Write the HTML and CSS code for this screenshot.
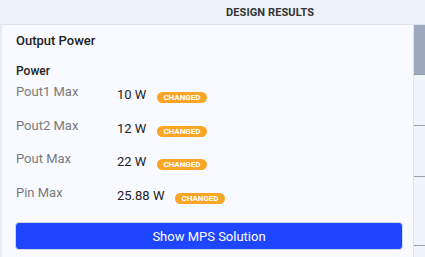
FILE: index.html
```html
<!DOCTYPE html>
<html>
<head>
<meta charset="utf-8">
<link rel="stylesheet" href="styles.css">
</head>
<body>
<div class="header">DESIGN RESULTS</div>
<div class="main">
  <div class="panel">
    <div class="title">Output Power</div>
    <div class="section">Power</div>
    <div class="row">
      <div class="label">Pout1 Max</div>
      <div class="value">10 W</div>
      <div class="badge">CHANGED</div>
    </div>
    <div class="row">
      <div class="label">Pout2 Max</div>
      <div class="value">12 W</div>
      <div class="badge">CHANGED</div>
    </div>
    <div class="row">
      <div class="label">Pout Max</div>
      <div class="value">22 W</div>
      <div class="badge">CHANGED</div>
    </div>
    <div class="row">
      <div class="label">Pin Max</div>
      <div class="value">25.88 W</div>
      <div class="badge">CHANGED</div>
    </div>
    <button class="btn">Show MPS Solution</button>
  </div>
  <div class="scroll">
    <div class="thumb"></div>
    <div class="seg s1"></div>
    <div class="seg s2"></div>
    <div class="seg s3"></div>
  </div>
</div>
</body>
</html>
```
FILE: styles.css
```css
html, body {
  margin: 0;
  padding: 0;
  height: 100%;
  overflow: hidden;
}
body {
  background: #e6ebf3;
  font-family: Roboto, "Liberation Sans", sans-serif;
  color: #222;
}
.header {
  height: 24px;
  line-height: 25px;
  background: #eef3fb;
  border-bottom: 1px solid #dfe5ee;
  padding-left: 226px;
  font-size: 11px;
  font-weight: 700;
  letter-spacing: 0.1px;
  color: #333;
}
.main {
  display: flex;
  height: 232px;
}
.panel {
  margin-left: 2px;
  width: 411px;
  background: #f8faff;
  padding: 8px 10px 0 14px;
  box-sizing: border-box;
  display: flex;
  flex-direction: column;
}
.title {
  font-size: 13px;
  line-height: 16px;
  font-weight: 500;
  color: #222;
}
.section {
  margin-top: 15px;
  font-size: 12px;
  line-height: 14px;
  font-weight: 500;
  color: #222;
}
.row {
  display: flex;
  align-items: flex-start;
  height: 33.5px;
  font-size: 13px;
  line-height: 16px;
}
.section + .row {
  margin-top: 6px;
}
.label {
  width: 101px;
  color: #7a7a7a;
}
.value {
  margin-top: 3px;
  color: #222;
}
.badge {
  margin-left: 11px;
  margin-top: 8px;
  height: 11px;
  line-height: 11px;
  padding: 0 6px;
  border-radius: 6px;
  background: #f9a526;
  color: #fff;
  font-size: 8px;
  font-weight: 700;
  letter-spacing: 0;
}
.btn {
  margin: 4px 0 0 -1px;
  height: 28px;
  width: 388px;
  background: #1f46ff;
  border: 1px solid #d3d8e3;
  border-radius: 4px;
  color: #fff;
  font-family: Roboto, "Liberation Sans", sans-serif;
  font-size: 13px;
  font-weight: 400;
  padding: 0;
}
.scroll {
  width: 11px;
  border-left: 1px solid #dde3ec;
  background: #f0f4fb;
  display: flex;
  flex-direction: column;
}
.thumb {
  height: 49px;
  background: #9ca9bc;
  border-bottom: 1px solid #8d96a3;
}
.seg {
  border-bottom: 1px solid #9aa2ad;
}
.s1 { height: 50px; }
.s2 { height: 50px; }
.s3 { height: 68px; }
```
